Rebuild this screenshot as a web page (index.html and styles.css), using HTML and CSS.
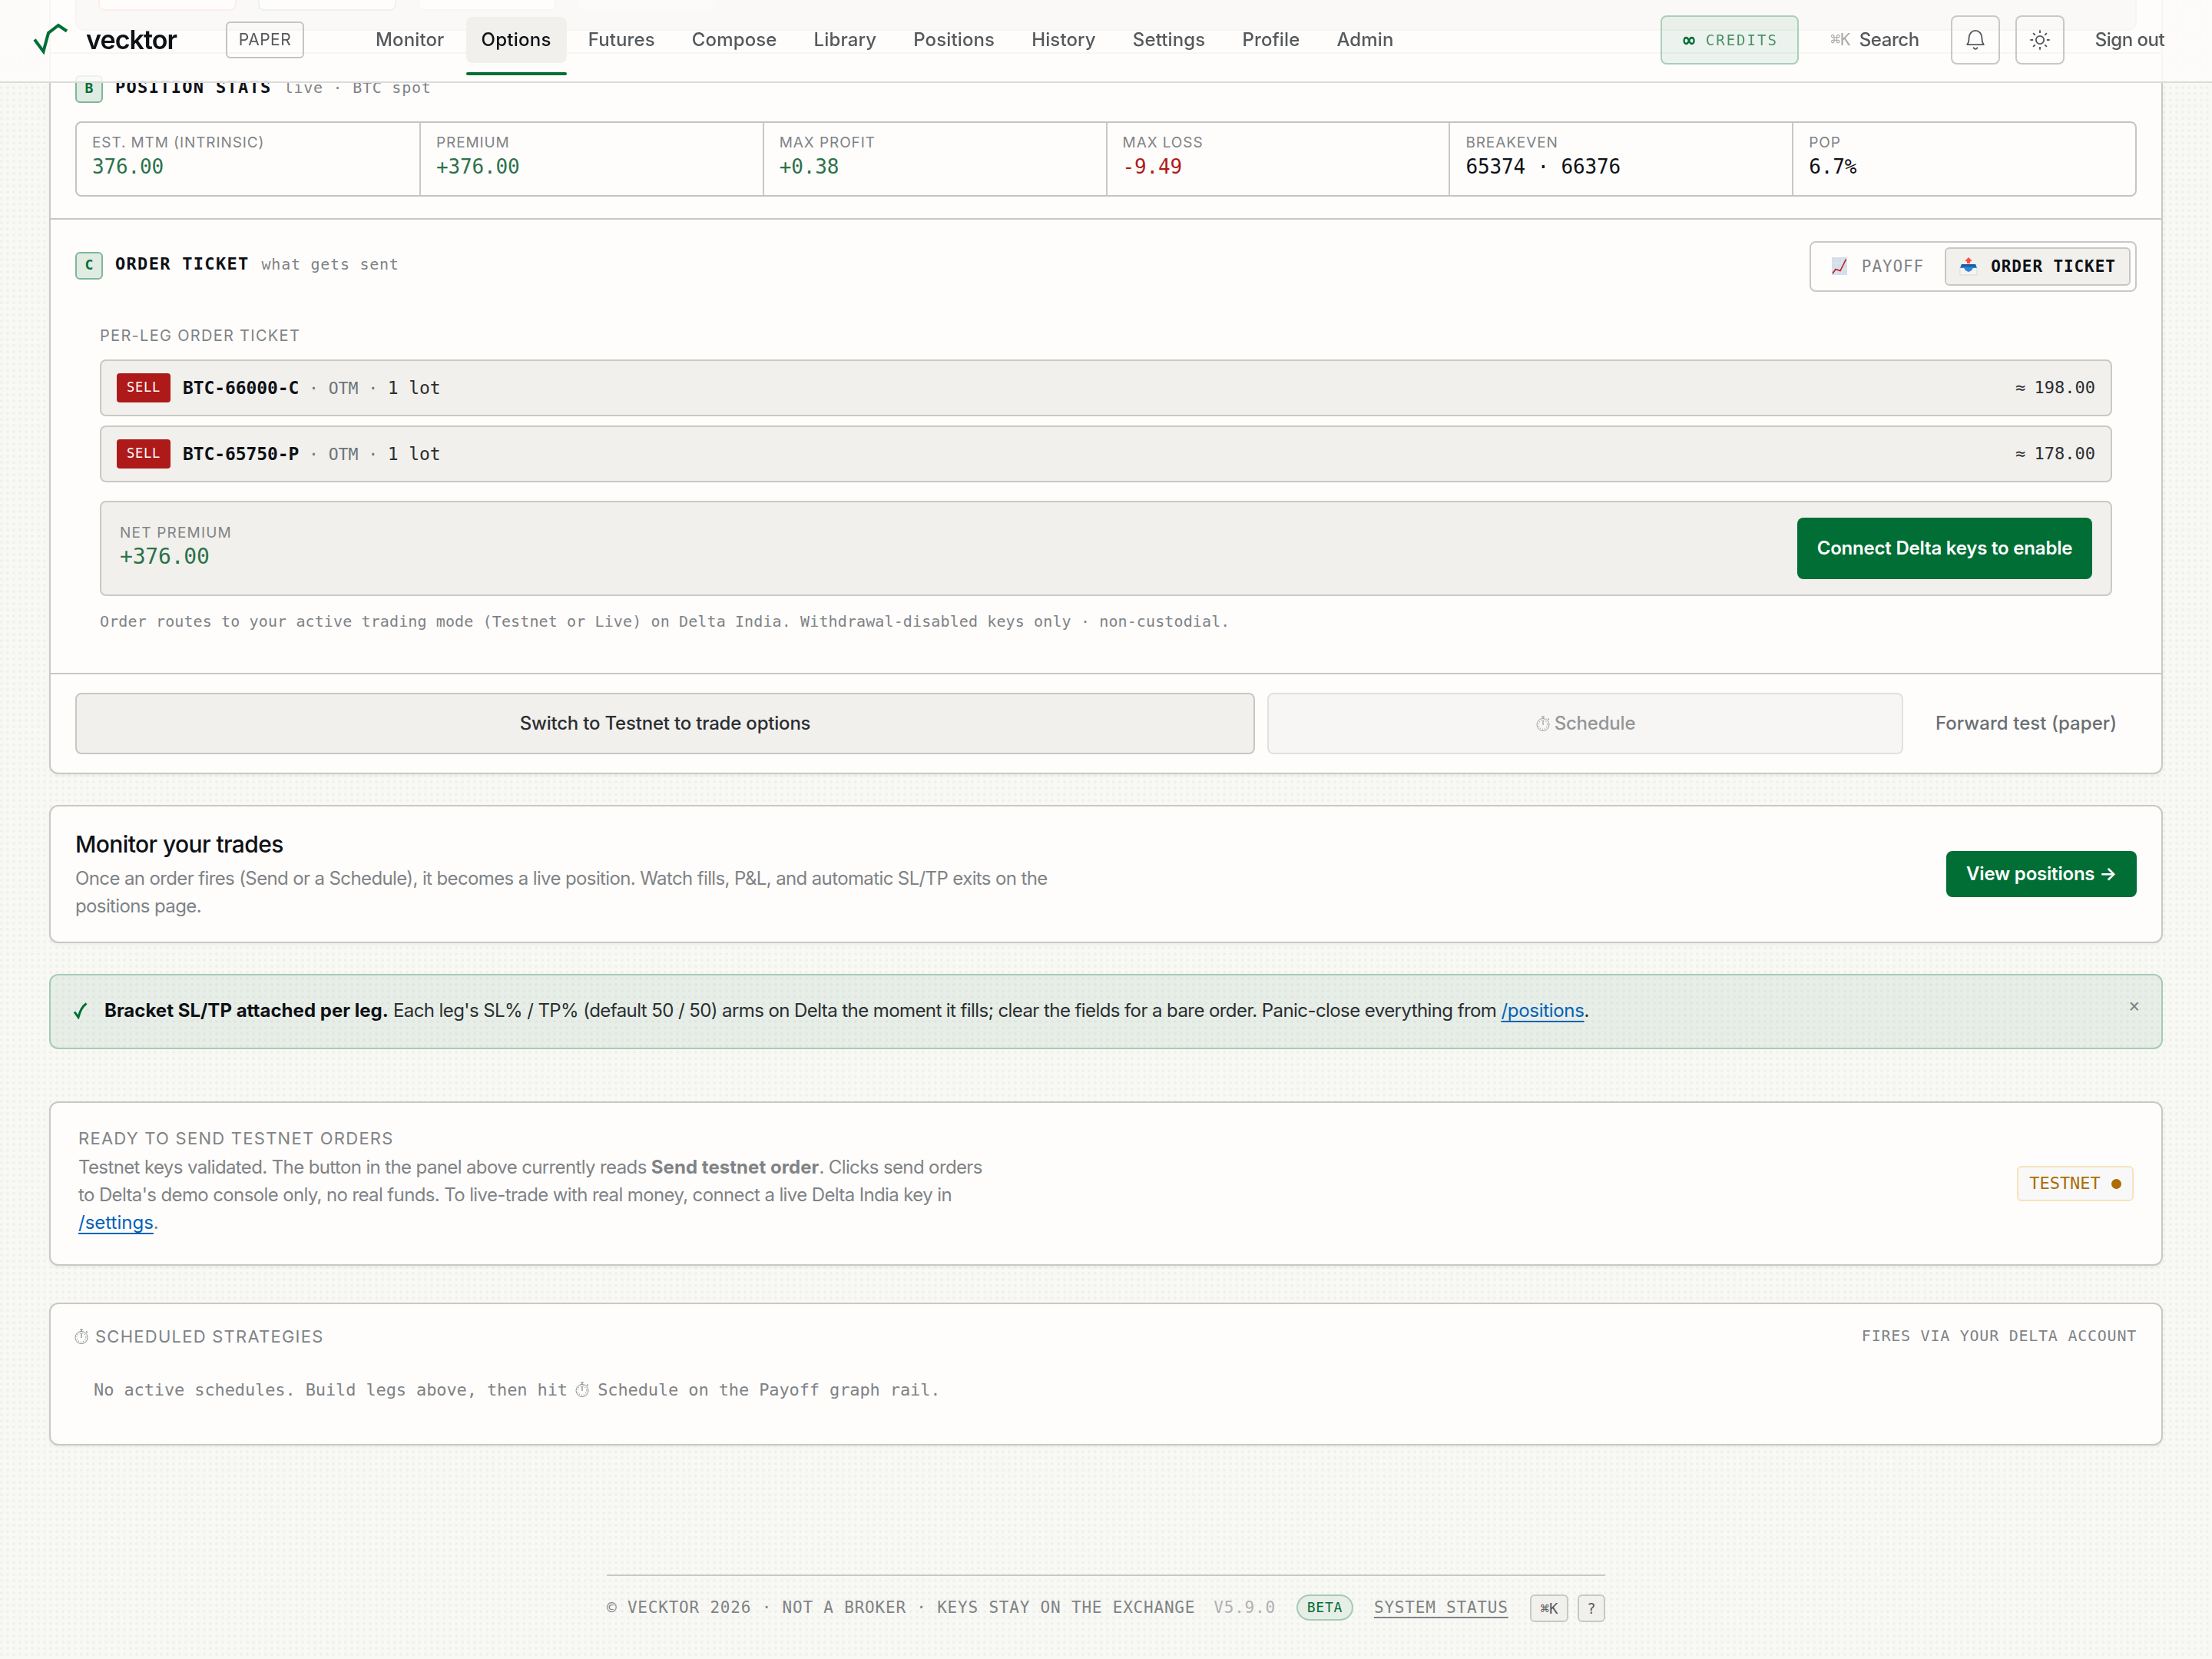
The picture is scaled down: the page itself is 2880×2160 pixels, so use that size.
FILE: index.html
```html
<!DOCTYPE html>
<html lang="en">
  <head>
    <meta charset="UTF-8" />
    <meta name="viewport" content="width=device-width, initial-scale=1.0" />
    <title>Options · vecktor</title>
    <link rel="stylesheet" href="styles.css">
  </head>
  <body>
    <header class="topbar">
      <a class="brand">
        <svg class="brand-mark" viewBox="0 0 48 48" fill="none" stroke="#006e35" stroke-width="4">
          <path d="M3 25.5 L14.5 41 L21 17 L34 7 L45 14.5" />
        </svg>
        <span class="brand-name">vecktor</span>
      </a>
      <span class="mode">PAPER</span>
      <nav class="nav">
        <a>Monitor</a>
        <a class="active">Options</a>
        <a>Futures</a>
        <a>Compose</a>
        <a>Library</a>
        <a>Positions</a>
        <a>History</a>
        <a>Settings</a>
        <a>Profile</a>
        <a>Admin</a>
      </nav>
      <div class="tools">
        <a class="credits"><b>∞</b><span>CREDITS</span></a>
        <a class="search"><kbd>⌘K</kbd><span>Search</span></a>
        <button class="icon-btn">
          <svg viewBox="0 0 32 32" fill="none" stroke="#55595c" stroke-width="2" stroke-linecap="round" stroke-linejoin="round">
            <path d="M4.500 22.500 C6.500 20 7 17 7 13 C7 7.500 11 3 16 3 C21 3 25 7.500 25 13 C25 17 25.500 20 27.500 22.500 Z" />
            <path d="M13.500 27 C14.500 29 17.500 29 18.500 27" />
          </svg>
        </button>
        <button class="icon-btn">
          <svg viewBox="0 0 32 32" fill="none" stroke="#55595c" stroke-width="2">
            <circle cx="16" cy="16" r="5.500" />
            <path d="M16 2.500v4M16 25.500V29.500M2.500 16h4M25.500 16H29.500M6.500 6.500l2.800 2.800M22.700 22.700l2.800 2.800M6.500 25.500l2.800-2.800M22.700 9.300l2.800-2.800" />
          </svg>
        </button>
        <a class="signout">Sign out</a>
      </div>
    </header>

    <main class="page">
      <section class="panel builder">
        <div class="legs">
          <div class="leg leg-sell"></div>
          <div class="leg leg-buy"></div>
          <div class="leg"></div>
          <div class="leg leg-ghost"></div>
        </div>

        <div class="block">
          <div class="block-head">
            <span class="step">B</span>
            <span class="block-title">POSITION STATS</span>
            <span class="block-sub">live · BTC spot</span>
          </div>
          <div class="stats">
            <div class="stat"><span>EST. MTM (INTRINSIC)</span><b class="up">376.00</b></div>
            <div class="stat"><span>PREMIUM</span><b class="up">+376.00</b></div>
            <div class="stat"><span>MAX PROFIT</span><b class="up">+0.38</b></div>
            <div class="stat"><span>MAX LOSS</span><b class="down">-9.49</b></div>
            <div class="stat"><span>BREAKEVEN</span><b>65374 · 66376</b></div>
            <div class="stat"><span>POP</span><b>6.7%</b></div>
          </div>
        </div>

        <div class="block">
          <div class="ticket-head">
            <div class="block-head">
              <span class="step">C</span>
              <span class="block-title">ORDER TICKET</span>
              <span class="block-sub">what gets sent</span>
            </div>
            <div class="switch">
              <button>
                <svg class="emoji" viewBox="0 0 24 24">
                  <rect x="2" y="0" width="20" height="23" fill="#d3dee8" />
                  <path d="M8.500 0v23M15 0v23M2 7.500h20M2 15h20" stroke="#e0e8ef" />
                  <path d="M3 21 L7 15.500 L13 17.500 L20.500 2.500" fill="none" stroke="#c4161c" stroke-width="1.600" />
                </svg>
                PAYOFF
              </button>
              <button class="on">
                <svg class="emoji" viewBox="0 0 24 24">
                  <path d="M1 12.500h22v10.500H1z" fill="#f4f4f4" stroke="#d9d9d9" />
                  <path d="M3 9h18l2 5h-5l-2.500 3.500L12 19l-3.500-1.500L6 14H1z" fill="#2f86d8" />
                  <path d="M3 9h18l1 3.500H2z" fill="#1f5c9c" />
                  <path d="M12 0l4.500 4.500L14 5.500V8h-4V5.500L7.500 4.500z" fill="#ff4b42" />
                </svg>
                ORDER TICKET
              </button>
            </div>
          </div>

          <div class="ticket">
            <div class="ticket-label">PER-LEG ORDER TICKET</div>
            <div class="order">
              <span class="side">SELL</span>
              <span class="order-name"><b>BTC-66000-C</b><i> · OTM · </i>1 lot</span>
              <span class="price">≈ 198.00</span>
            </div>
            <div class="order">
              <span class="side">SELL</span>
              <span class="order-name"><b>BTC-65750-P</b><i> · OTM · </i>1 lot</span>
              <span class="price">≈ 178.00</span>
            </div>
            <div class="net">
              <div class="net-value"><span>NET PREMIUM</span><b>+376.00</b></div>
              <button class="btn primary connect">Connect Delta keys to enable</button>
            </div>
            <p class="note">Order routes to your active trading mode (Testnet or Live) on Delta India. Withdrawal-disabled keys only · non-custodial.</p>
          </div>
        </div>

        <div class="actions">
          <button class="btn">Switch to Testnet to trade options</button>
          <button class="btn disabled">
            <svg class="watch" viewBox="0 0 20 22"><use href="#stopwatch" /></svg>
            Schedule
          </button>
          <button class="btn ghost">Forward test (paper)</button>
        </div>
      </section>

      <section class="panel monitor">
        <div class="monitor-text">
          <h2>Monitor your trades</h2>
          <p>Once an order fires (Send or a Schedule), it becomes a live position. Watch fills, P&amp;L, and automatic SL/TP exits on the positions page.</p>
        </div>
        <button class="btn primary view">View positions →</button>
      </section>

      <section class="banner">
        <svg class="tick" viewBox="0 0 20 22" fill="none" stroke="#006e35" stroke-width="3">
          <path d="M2 12.500 L7 19.500 C9 11.500 12 5.500 17.500 1.500" />
        </svg>
        <p><strong>Bracket SL/TP attached per leg.</strong> Each leg's SL% / TP% (default 50 / 50) arms on Delta the moment it fills; clear the fields for a bare order. Panic-close everything from <a>/positions</a>.</p>
        <button class="close">×</button>
      </section>

      <section class="panel ready">
        <div class="ready-text">
          <h3>READY TO SEND TESTNET ORDERS</h3>
          <p>Testnet keys validated. The button in the panel above currently reads <strong>Send testnet order</strong>. Clicks send orders to Delta's demo console only, no real funds. To live-trade with real money, connect a live Delta India key in <a>/settings</a>.</p>
        </div>
        <span class="testnet">TESTNET<i></i></span>
      </section>

      <section class="panel schedules">
        <div class="schedules-head">
          <h3><svg class="watch" viewBox="0 0 20 22"><use href="#stopwatch" /></svg>SCHEDULED STRATEGIES</h3>
          <span>FIRES VIA YOUR DELTA ACCOUNT</span>
        </div>
        <p>No active schedules. Build legs above, then hit <svg class="watch" viewBox="0 0 20 22"><use href="#stopwatch" /></svg> Schedule on the Payoff graph rail.</p>
      </section>
    </main>

    <footer class="footer">
      <span class="legal">© VECKTOR 2026 · NOT A BROKER · KEYS STAY ON THE EXCHANGE</span>
      <span class="version">V5.9.0</span>
      <span class="beta">BETA</span>
      <a class="status">SYSTEM STATUS</a>
      <kbd class="key key-k">⌘K</kbd>
      <kbd class="key">?</kbd>
    </footer>

    <svg class="defs">
      <symbol id="stopwatch" viewBox="0 0 20 22">
        <g fill="none" stroke="currentColor">
          <circle cx="10" cy="12.500" r="8" stroke-width="0.900" />
          <circle cx="10" cy="12.500" r="5.800" stroke-width="1.300" stroke-dasharray="0.800 2.240" />
          <path d="M10 7v6M10 2v2.500M8 2h4M16.200 4.500l1.500 1.500" stroke-width="1.200" />
        </g>
      </symbol>
    </svg>
  </body>
</html>
```
FILE: styles.css
```css
* {
  box-sizing: border-box;
}

body {
  margin: 0;
  height: 2160px;
  overflow: hidden;
  font-family: Inter, "Liberation Sans", sans-serif;
  font-size: 24px;
  line-height: 36px;
  color: #0e1116;
  background-color: #f8f8f4;
  background-image: radial-gradient(circle at 2px 2px, #f0f1ed 1.6px, transparent 2.2px);
  background-size: 8px 8px;
}

h2,
h3,
p {
  margin: 0;
  font-weight: 400;
}

i {
  font-style: normal;
}

button {
  font: inherit;
  color: inherit;
  padding: 0;
  border: none;
  background: none;
}

.defs {
  display: none;
}

/* top bar */
.topbar {
  position: fixed;
  top: 0;
  left: 0;
  right: 0;
  z-index: 10;
  height: 108px;
  padding: 0 42px 2px 42px;
  display: flex;
  align-items: center;
  background: rgba(254, 253, 252, 0.85);
  border-bottom: 2px solid #dbdbda;
}

.brand {
  display: flex;
  align-items: center;
  width: 252px;
}

.brand-mark {
  width: 48px;
  height: 48px;
  margin-right: 22px;
  margin-bottom: 4px;
}

.brand-name {
  font-size: 34px;
  font-weight: 600;
  letter-spacing: -0.9px;
}

.mode {
  width: 102px;
  height: 48px;
  line-height: 43px;
  text-align: center;
  font-size: 21px;
  letter-spacing: 0.5px;
  color: #55595c;
  border: 2px solid #c4c4c4;
  border-radius: 6px;
}

.nav {
  display: flex;
  gap: 8px;
  margin-left: 73px;
}

.nav a {
  position: relative;
  height: 60px;
  line-height: 60px;
  padding: 0 20px;
  border-radius: 8px;
  font-weight: 450;
  color: #55595c;
  letter-spacing: 0.13px;
}

.nav .active {
  color: #0e1116;
  letter-spacing: 0.27px;
  background: #f1f0ed;
}

.nav .active::after {
  content: "";
  position: absolute;
  left: 0;
  right: 0;
  bottom: -16px;
  height: 4px;
  border-radius: 2px;
  background: #006e35;
}

.tools {
  display: flex;
  gap: 20px;
  margin-left: auto;
  color: #55595c;
}

.tools > * {
  height: 64px;
  display: flex;
  align-items: center;
  justify-content: center;
  font-weight: 450;
}

.credits {
  width: 180px;
  gap: 14px;
  border: 2px solid #a9cfb9;
  border-radius: 8px;
  background: rgba(0, 110, 53, 0.07);
  font-family: "DejaVu Sans Mono", monospace;
  font-size: 20px;
}

.credits b {
  font-size: 26px;
  color: #006e35;
}

.credits span {
  color: #4b9168;
  font-weight: 400;
  font-size: 19px;
  letter-spacing: 2px;
  margin-right: -2px;
}

.search {
  width: 158px;
  gap: 12px;
  letter-spacing: -0.4px;
}

.search kbd {
  font-family: "DejaVu Sans Mono", monospace;
  font-size: 22px;
  font-weight: 400;
  letter-spacing: -0.5px;
  color: #a9abac;
}

.icon-btn {
  width: 64px;
  border: 2px solid #c8c8c6;
  border-radius: 8px;
}

.icon-btn svg {
  width: 30px;
  height: 30px;
}

.signout {
  width: 130px;
  letter-spacing: -0.5px;
  white-space: nowrap;
}

/* panels */
.page {
  padding: 0 64px;
}

.panel {
  background: #fefdfc;
  border: 2px solid #c8c8c6;
  border-radius: 12px;
  box-shadow: 0 2px 4px rgba(14, 17, 22, 0.05);
}

.builder {
  height: 1008px;
  border-top: none;
  border-radius: 0 0 12px 12px;
}

.legs {
  height: 40px;
  margin: 0 32px;
  padding: 0 28px;
  display: flex;
  gap: 28px;
  border: 2px solid #c8c8c6;
  border-top: none;
  border-radius: 0 0 12px 12px;
  background: #e6e5e2;
}

.leg {
  width: 180px;
  height: 14px;
  border: 2px solid #cfcfcb;
  border-top: none;
  border-radius: 0 0 8px 8px;
  background: #fefdfc;
}

.leg-sell {
  border-color: #ff8a8a;
}

.leg-buy {
  border-color: #7fba98;
}

.leg-ghost {
  height: 12px;
  border: none;
  background: #efeeeb;
}

.block {
  padding: 28px 32px;
  border-bottom: 2px solid #c8c8c6;
}

.legs + .block {
  margin-top: 28px;
  border-top: 2px solid #c8c8c6;
}

.block-head {
  display: flex;
  align-items: baseline;
  height: 36px;
  font-family: "DejaVu Sans Mono", monospace;
}

.step {
  width: 36px;
  height: 36px;
  line-height: 30px;
  margin-right: 16px;
  text-align: center;
  font-size: 18px;
  font-weight: 700;
  color: #006e35;
  background: #e0ebe3;
  border: 2px solid #80b799;
  border-radius: 6px;
}

.block-title {
  font-size: 22px;
  line-height: 28px;
  font-weight: 700;
  letter-spacing: 1.3px;
  margin-right: 16px;
}

.block-sub {
  font-size: 20px;
  line-height: 28px;
  letter-spacing: 0.75px;
  color: #7f8386;
}

.stats {
  display: grid;
  grid-template-columns: 446px repeat(5, 1fr);
  height: 98px;
  margin-top: 24px;
  border: 2px solid #c4c4c2;
  border-radius: 8px;
}

.stat {
  padding: 11px 20px;
  display: flex;
  flex-direction: column;
  border-left: 2px solid #c8c8c6;
}

.stat:first-child {
  border-left: none;
}

.stat span {
  font-size: 19px;
  line-height: 30px;
  letter-spacing: 0.9px;
  color: #7f8386;
}

.stat b {
  font-family: "DejaVu Sans Mono", monospace;
  font-size: 26px;
  line-height: 32px;
  font-weight: 400;
  letter-spacing: -0.15px;
}

.stat .up {
  color: #2c7249;
}

.stat .down {
  color: #ae1a19;
}

.ticket-head {
  display: flex;
  justify-content: space-between;
}

.ticket-head .block-head {
  margin-top: 14px;
}

.switch {
  display: flex;
  height: 66px;
  padding: 6px;
  border: 2px solid #c8c8c6;
  border-radius: 8px;
}

.switch button {
  width: 168px;
  height: 50px;
  padding-right: 8px;
  display: flex;
  align-items: center;
  justify-content: center;
  gap: 17px;
  font-family: "DejaVu Sans Mono", monospace;
  font-size: 21px;
  letter-spacing: 0.9px;
  color: #7f8386;
}

.switch .on {
  width: 242px;
  padding-right: 0;
  font-weight: 700;
  color: #0e1116;
  background: #f1f0ed;
  border: 2px solid #c9c7c2;
  border-radius: 6px;
}

.emoji {
  width: 24px;
  height: 24px;
  flex: none;
}

.ticket {
  padding: 42px 32px 24px;
}

.ticket-label {
  margin-bottom: 16px;
  font-size: 20px;
  line-height: 30px;
  letter-spacing: 1.3px;
  color: #7f8386;
}

.order {
  height: 74px;
  margin-bottom: 12px;
  padding: 0 20px;
  display: flex;
  align-items: center;
  font-family: "DejaVu Sans Mono", monospace;
  background: #f1f0ed;
  border: 2px solid #c9c9c5;
  border-radius: 8px;
}

.side {
  width: 70px;
  height: 38px;
  line-height: 36px;
  margin-right: 16px;
  text-align: center;
  font-size: 17px;
  letter-spacing: 0.8px;
  color: #fff;
  background: #ae1a19;
  border-radius: 4px;
}

.order-name {
  white-space: pre;
  font-size: 23px;
  letter-spacing: -0.1px;
  color: #2b2e32;
}

.order-name b {
  color: #0e1116;
}

.order-name i {
  font-size: 21.5px;
  letter-spacing: -0.1px;
  color: #6f7376;
}

.price {
  margin-left: auto;
  font-size: 22px;
  word-spacing: -2px;
  color: #2b2e32;
}

.net {
  height: 124px;
  margin-top: 24px;
  padding: 0 24px;
  display: flex;
  align-items: center;
  justify-content: space-between;
  background: #f1f0ed;
  border: 2px solid #c9c9c5;
  border-radius: 8px;
}

.net-value {
  display: flex;
  flex-direction: column;
  padding-bottom: 6px;
}

.net-value span {
  font-size: 19px;
  line-height: 28px;
  letter-spacing: 1.2px;
  color: #7f8386;
}

.net-value b {
  font-family: "DejaVu Sans Mono", monospace;
  font-size: 28px;
  line-height: 34px;
  font-weight: 400;
  letter-spacing: -0.2px;
  color: #2c7249;
}

.note {
  margin-top: 18px;
  font-family: "DejaVu Sans Mono", monospace;
  font-size: 20px;
  line-height: 30px;
  letter-spacing: 0.12px;
  color: #7f8386;
}

.btn {
  display: flex;
  align-items: center;
  justify-content: center;
  gap: 5px;
  height: 80px;
  font-weight: 450;
  letter-spacing: -0.2px;
  white-space: nowrap;
  color: #2b2e32;
  background: #f1f0ed;
  border: 2px solid #c9c7c2;
  border-radius: 8px;
}

.primary {
  font-weight: 600;
  color: #fff;
  background: #006e35;
  border: none;
}

.connect {
  width: 384px;
}

.view {
  width: 248px;
  height: 60px;
  margin-bottom: 2px;
}

.actions {
  display: grid;
  grid-template-columns: 1536px 828px 288px;
  gap: 16px;
  padding: 24px 32px;
}

.disabled {
  color: #949698;
  background: #f7f6f4;
  border-color: #e1e1de;
}

.ghost {
  color: #6b6f73;
  letter-spacing: 0.05px;
  background: none;
  border-color: transparent;
}

.watch {
  width: 20px;
  height: 22px;
  flex: none;
}

.monitor {
  height: 180px;
  margin-top: 40px;
  padding: 30px 32px 28px;
  display: flex;
  align-items: center;
  justify-content: space-between;
}

.monitor-text {
  width: 1310px;
}

.monitor h2 {
  margin-bottom: 8px;
  font-size: 30px;
  line-height: 38px;
  font-weight: 500;
  letter-spacing: -0.6px;
}

.monitor p,
.ready p {
  color: #7f8386;
  letter-spacing: -0.62px;
}

.banner {
  height: 98px;
  margin-top: 40px;
  padding: 28px 28px 30px 28px;
  display: flex;
  background: rgba(0, 110, 53, 0.065);
  border: 2px solid #a5cbb6;
  border-radius: 12px;
}

.tick {
  width: 20px;
  height: 22px;
  margin: 7px 21px 0 1px;
}

.banner p {
  color: #2b2e32;
  letter-spacing: -0.58px;
}

.banner strong {
  font-weight: 700;
  letter-spacing: 0.02px;
  color: #0e1116;
}

.banner a,
.ready a {
  color: #0062b8;
  letter-spacing: -0.3px;
  text-decoration: underline;
  text-decoration-thickness: 2px;
  text-underline-offset: 5px;
}

.ready a {
  letter-spacing: 0;
}

.close {
  margin-left: auto;
  height: 24px;
  line-height: 24px;
  font-family: "DejaVu Sans Mono", monospace;
  font-size: 24px;
  color: #7f8386;
}

.ready {
  height: 214px;
  margin-top: 68px;
  padding: 28px 36px 36px;
  display: flex;
  align-items: center;
  justify-content: space-between;
}

.ready-text {
  width: 1200px;
}

.ready h3,
.schedules h3 {
  font-size: 22px;
  letter-spacing: 1.25px;
  color: #7f8386;
}

.ready h3 {
  margin-bottom: 2px;
}

.ready strong {
  font-weight: 700;
  letter-spacing: 0.05px;
}

.testnet {
  width: 152px;
  height: 46px;
  margin-top: 8px;
  display: flex;
  align-items: center;
  justify-content: center;
  gap: 14px;
  font-family: "DejaVu Sans Mono", monospace;
  font-size: 22px;
  color: #ab6c00;
  background: #f8f8f8;
  border: 2px solid #f7e3bd;
  border-radius: 6px;
}

.testnet i {
  width: 13px;
  height: 13px;
  border-radius: 50%;
  background: #ab6c00;
}

.schedules {
  height: 186px;
  margin-top: 48px;
  padding: 28px 32px;
}

.schedules-head {
  display: flex;
  justify-content: space-between;
  line-height: 28px;
}

.schedules h3 .watch {
  margin: 0 8px 0 -2px;
  vertical-align: -3px;
}

.schedules-head span {
  font-family: "DejaVu Sans Mono", monospace;
  font-size: 20px;
  line-height: 26px;
  letter-spacing: 0.75px;
  color: #7f8386;
}

.schedules p {
  padding: 38px 24px;
  font-family: "DejaVu Sans Mono", monospace;
  font-size: 22px;
  letter-spacing: -0.12px;
  color: #7f8386;
}

.schedules p .watch {
  margin: 0 -3px 0 -4px;
  vertical-align: -3px;
}

/* footer */
.footer {
  width: 1300px;
  margin: 168px auto 0;
  padding-top: 24px;
  display: flex;
  align-items: flex-start;
  border-top: 2px solid #c8c8c4;
  font-family: "DejaVu Sans Mono", monospace;
  font-size: 21px;
  line-height: 34px;
  letter-spacing: 0.8px;
  white-space: nowrap;
  color: #7f8386;
}

.version {
  margin-left: 24px;
  color: #b0b2b2;
}

.beta {
  width: 74px;
  height: 34px;
  line-height: 30px;
  margin: 0 27px;
  text-align: center;
  font-size: 18px;
  color: #006e35;
  background: #e7eee7;
  border: 2px solid #a5cbb6;
  border-radius: 17px;
}

.status {
  text-decoration: underline;
  text-decoration-thickness: 2px;
  text-underline-offset: 5px;
}

.key {
  width: 36px;
  height: 36px;
  line-height: 32px;
  margin-left: auto;
  text-align: center;
  font-family: inherit;
  font-size: 19px;
  letter-spacing: 0;
  color: #55595c;
  background: #f1f0ed;
  border: 2px solid #c8c8c4;
  border-radius: 6px;
}

.key-k {
  width: 50px;
}

.key-k + .key {
  margin-left: 12px;
}
```
